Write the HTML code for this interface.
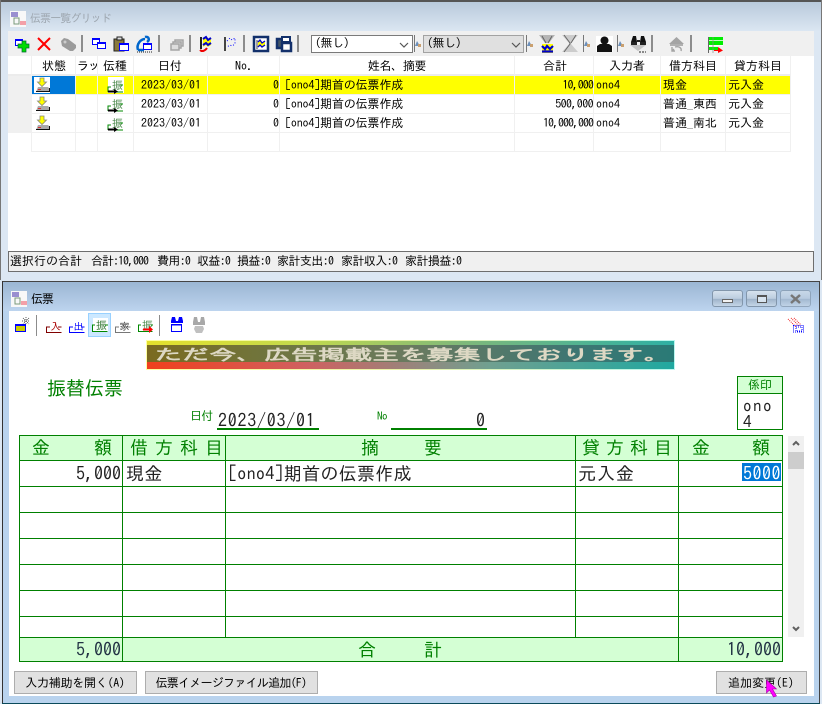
<!DOCTYPE html>
<html lang="ja"><head><meta charset="utf-8"><title>伝票</title>
<style>
html,body{margin:0;padding:0;width:822px;height:704px;overflow:hidden;background:#dce7f3}
body{position:relative;font-family:"Liberation Sans","IPAGothic","Noto Sans CJK JP",sans-serif}
div,svg{position:absolute}
svg{overflow:visible}
.t{font-family:"IPAGothic","Noto Sans CJK JP",monospace;font-size:12px;line-height:14px;white-space:nowrap;color:#000}
.c{transform:translateX(-50%)}
.r{text-align:right}
.v{font-size:18px;line-height:20px;color:#222}
.h{font-size:18px;line-height:20px;color:#008000}
.g{background:#008000}
.l{background:#f0f0f0}
.sep{width:2px;background:#8c8c8c}
.thin{width:1px;background:#777;top:35px;height:17px}
.btn{background:#e1e1e1;border:1px solid #adadad;box-sizing:border-box;height:23px;top:671px}
.wb{top:290px;height:17px;width:31px;box-sizing:border-box;border:1px solid #8296ab;border-radius:3px;background:linear-gradient(#d6e2ee,#bccddf 50%,#9fb4ca 55%,#c4d5e7)}
</style></head><body>

<!-- top window -->
<div style="left:0;top:0;width:822px;height:280px;background:#dce7f3"></div>
<div style="left:0;top:0;width:822px;height:31px;background:linear-gradient(#b6c8da,#dbe6f2)"></div>
<div style="left:0;top:0;width:822px;height:2px;background:#555"></div>
<div style="left:0;top:0;width:1px;height:280px;background:#777"></div>
<div style="left:821px;top:0;width:1px;height:280px;background:#777"></div>
<svg style="left:10px;top:11px" width="16" height="16"><rect width="16" height="16" fill="#f8f8f8"/><rect x="1" y="1" width="7" height="5" fill="#9a8fd0"/><rect x="4" y="7" width="5" height="6" fill="none" stroke="#7a9a7a"/><rect x="10" y="10" width="6" height="4" fill="#f3a0a8"/></svg>
<div class="t" style="left:30px;top:12px;font-size:11px;color:#9ea7b0;letter-spacing:-.9px">伝票一覧グリッド</div>

<!-- toolbar -->
<div style="left:8px;top:31px;width:806px;height:25px;background:#f0f0f0"></div>
<svg style="left:15px;top:37px" width="15" height="15"><rect x=".5" y="2.500" width="7" height="6" fill="#fff" stroke="#00f"/><rect y="2" width="8" height="2" fill="#00f"/><path d="M7 4h4v3h3v4h-3v4H7v-4H3V7h4z" fill="#0d0" stroke="#063" stroke-width=".7"/></svg>
<svg style="left:37px;top:37px" width="14" height="14"><path d="M1 1L13 13M13 1L1 13" stroke="#f00" stroke-width="2"/></svg>
<svg style="left:60px;top:37px" width="17" height="15"><path d="M1 4l3-3 4 1 8 6v3l-3 3h-3L2 9z" fill="#9b9b9b"/><circle cx="5" cy="5" r="1.500" fill="#ccc"/></svg>
<div class="sep" style="left:81px;top:35px;height:17px"></div>
<svg style="left:92px;top:38px" width="14" height="11"><g fill="#fff" stroke="#00f"><rect x=".5" y=".5" width="7" height="6"/><rect x="5.500" y="4.500" width="8" height="6"/></g><rect y="0" width="8" height="2" fill="#00f"/><rect x="5" y="4" width="9" height="2" fill="#00f"/></svg>
<svg style="left:113px;top:36px" width="16" height="16"><rect x="1" y="3" width="10" height="12" fill="#8a7a3c" stroke="#222"/><rect x="4" y="1" width="5" height="3" fill="#ddd" stroke="#222"/><rect x="6.500" y="7.500" width="9" height="7" fill="#fff" stroke="#00f"/><rect x="6" y="7" width="10" height="2" fill="#00f"/></svg>
<svg style="left:136px;top:36px" width="17" height="17"><path d="M2 14C0 8 5 3 9 3M9 1c4-1 5 3 2 5M2 14h6" stroke="#06c" stroke-width="2.500" fill="none"/><rect x="7.500" y="7.500" width="8" height="6" fill="#fff" stroke="#00f"/><rect x="7" y="7" width="9" height="2" fill="#00f"/><path d="M1 16h15" stroke="#222" stroke-dasharray="1 1"/></svg>
<div class="sep" style="left:158px;top:35px;height:17px"></div>
<svg style="left:170px;top:39px" width="14" height="12"><g fill="#ddd" stroke="#a5a5a5" stroke-width="1.500"><rect x="5" y="1" width="8" height="6"/><rect x="3" y="3" width="8" height="6"/><rect x="1" y="5" width="8" height="6"/></g></svg>
<div class="sep" style="left:189px;top:35px;height:17px"></div>
<svg style="left:199px;top:36px" width="14" height="16"><path d="M2 1v12" stroke="#222" stroke-width="2"/><path d="M4 3l3-2 2 3 3-2v7l-3 2-2-2-3 2z" fill="#ff0"/><path d="M4 3l3-2 2 3 3-2M4 9l3-2 2 2 3-2" fill="none" stroke="#00c" stroke-width="2"/><path d="M1 14c2 2 5 1 7-2" stroke="#e00" stroke-width="2" fill="none"/></svg>
<svg style="left:223px;top:36px" width="14" height="15"><path d="M2 1v14" stroke="#444" stroke-width="2"/><path d="M4 5l3-3 2 2 3-2v6l-3 2-2-1-3 2" fill="none" stroke="#00f" stroke-dasharray="1 2"/></svg>
<div class="sep" style="left:243px;top:35px;height:17px"></div>
<svg style="left:253px;top:36px" width="16" height="16"><rect x="1" y="1" width="14" height="14" fill="#fff" stroke="#13306b" stroke-width="2.500"/><path d="M4 4v9" stroke="#444"/><path d="M5 6l2-2 2 3 3-2v5l-3 1-2-2-2 2z" fill="#ff0"/><path d="M5 6l2-2 2 3 3-2M5 11l2-2 2 2 3-2" fill="none" stroke="#00c" stroke-width="1.300"/></svg>
<svg style="left:276px;top:36px" width="16" height="16"><rect x="1" y="3" width="9" height="9" fill="#456" stroke="#13306b" stroke-width="2.500"/><rect x="6" y="1" width="8" height="5" fill="#fff" stroke="#13306b" stroke-width="2"/><rect x="6" y="7" width="9" height="8" fill="#fff" stroke="#13306b" stroke-width="2.500"/></svg>
<div class="sep" style="left:297px;top:35px;height:17px"></div>

<div style="left:311px;top:35px;width:102px;height:18px;box-sizing:border-box;background:#fff;border:1px solid #7a7a7a"></div>
<div class="t" style="left:315px;top:36px;letter-spacing:-.5px">(無し)</div>
<svg style="left:399px;top:42px" width="10" height="6"><path d="M1 1l4 4 4-4" stroke="#555" stroke-width="1.200" fill="none"/></svg>
<div style="left:423px;top:35px;width:101px;height:18px;box-sizing:border-box;background:#e0e0e0;border:1px solid #a2a2a2"></div>
<div class="t" style="left:427px;top:36px;letter-spacing:-.5px">(無し)</div>
<svg style="left:511px;top:42px" width="10" height="6"><path d="M1 1l4 4 4-4" stroke="#555" stroke-width="1.200" fill="none"/></svg>

<div class="thin" style="left:414px"></div>
<div class="thin" style="left:526px"></div>
<div class="thin" style="left:583px"></div>
<div class="thin" style="left:617px"></div>
<svg style="left:415px;top:41px" width="6" height="6"><path d="M2 0l3 5H0z" fill="#6d90bb"/><rect x="3" y="3" width="3" height="3" fill="#c9a070"/></svg>
<svg style="left:527px;top:41px" width="6" height="6"><path d="M2 0l3 5H0z" fill="#6d90bb"/><rect x="3" y="3" width="3" height="3" fill="#c9a070"/></svg>
<svg style="left:584px;top:41px" width="6" height="6"><path d="M2 0l3 5H0z" fill="#6d90bb"/><rect x="3" y="3" width="3" height="3" fill="#c9a070"/></svg>
<svg style="left:618px;top:41px" width="6" height="6"><path d="M2 0l3 5H0z" fill="#6d90bb"/><rect x="3" y="3" width="3" height="3" fill="#c9a070"/></svg>

<svg style="left:539px;top:35px" width="16" height="18"><path d="M0 0h16l-6 8H6z" fill="#b5b5b5"/><path d="M3 1l4 7M13 1L9 8" stroke="#666"/><rect x="3" y="9" width="11" height="9" fill="#ff0"/><path d="M3 11l3 3 2-3 3 3 3-3M3 16.500h11" stroke="#00c" stroke-width="2.200" fill="none"/></svg>
<svg style="left:562px;top:35px" width="16" height="18"><path d="M0 0h16L9 8v1l7 8H0l7-8V8z" fill="#ccc"/><path d="M2 0l6 8v1l-6 8M14 0L9 8" stroke="#666" fill="none"/></svg>
<svg style="left:596px;top:36px" width="17" height="16"><rect width="17" height="16" fill="#fff"/><circle cx="8.500" cy="4.500" r="4" fill="#111"/><path d="M1 16V10l3-2h9l3 2v6z" fill="#111"/></svg>
<svg style="left:630px;top:36px" width="17" height="17"><path d="M3 0h3l1 6H1zM11 0h3l2 6h-6z" fill="#111"/><path d="M1 6h6v3H1zM10 6h6v3h-6zM7 4h3v2H7z" fill="#222"/><path d="M0 9h16l-8 6z" fill="#c4c4c4"/><path d="M9 16h7" stroke="#222" stroke-dasharray="2 1"/></svg>
<div class="sep" style="left:651px;top:35px;height:17px"></div>
<svg style="left:669px;top:37px" width="15" height="15"><path d="M7.500 0L15 7H0z" fill="#a4a4a4"/><rect x="1" y="7" width="13" height="2" fill="#b0b0b0"/><path d="M3 10v4h3M5 12l-2 2M6 10c4-1 7 1 6 4" stroke="#a4a4a4" stroke-width="1.400" fill="none"/></svg>
<div class="sep" style="left:690px;top:35px;height:17px"></div>
<svg style="left:708px;top:37px" width="16" height="16"><rect width="15" height="8" fill="#0e0"/><rect y="10" width="10" height="3" fill="#0e0"/><path d="M0 3.500h15M0 8.500h15" stroke="#fff" stroke-width=".8"/><path d="M.5 0v16" stroke="#666"/><path d="M5 0v16" stroke="#888" stroke-width=".7"/><path d="M6 13h4V10l5 3.500-5 2.500v-2H6z" fill="#f00"/></svg>

<!-- grid -->
<div style="left:8px;top:56px;width:806px;height:195px;background:#fff"></div>
<div class="l" style="left:8px;top:75px;width:23px;height:57px"></div>
<div style="left:76px;top:75px;width:714px;height:19px;background:#ff0"></div>
<div style="left:32px;top:75px;width:44px;height:19px;background:#0078d7"></div>
<div style="left:34px;top:77px;width:16px;height:16px;background:#fff"></div>

<div class="l" style="left:8px;top:74px;width:783px;height:2px;background:#ececec"></div>
<div class="l" style="left:8px;top:94px;width:783px;height:1px"></div>
<div class="l" style="left:8px;top:113px;width:783px;height:1px"></div>
<div class="l" style="left:8px;top:132px;width:783px;height:1px"></div>
<div class="l" style="left:31px;top:151px;width:760px;height:1px"></div>
<div class="l" style="left:31px;top:56px;width:1px;height:96px"></div>
<div class="l" style="left:75px;top:56px;width:1px;height:96px"></div>
<div class="l" style="left:97px;top:56px;width:1px;height:96px"></div>
<div class="l" style="left:133px;top:56px;width:1px;height:96px"></div>
<div class="l" style="left:207px;top:56px;width:1px;height:96px"></div>
<div class="l" style="left:279px;top:56px;width:1px;height:96px"></div>
<div class="l" style="left:514px;top:56px;width:1px;height:96px"></div>
<div class="l" style="left:593px;top:56px;width:1px;height:96px"></div>
<div class="l" style="left:660px;top:56px;width:1px;height:96px"></div>
<div class="l" style="left:725px;top:56px;width:1px;height:96px"></div>
<div class="l" style="left:790px;top:56px;width:1px;height:96px"></div>

<div class="t c" style="left:54px;top:59px">状態</div>
<div style="left:76px;top:58px;width:21px;height:16px;overflow:hidden"><div class="t" style="left:1px;top:1px;letter-spacing:-1px">ラッ</div></div>
<div class="t c" style="left:115px;top:59px">伝種</div>
<div class="t c" style="left:170px;top:59px">日付</div>
<div class="t c" style="left:244px;top:59px">No.</div>
<div class="t c" style="left:397px;top:59px;letter-spacing:-.3px">姓名、摘要</div>
<div class="t c" style="left:555px;top:59px">合計</div>
<div class="t c" style="left:627px;top:59px">入力者</div>
<div class="t c" style="left:693px;top:59px">借方科目</div>
<div class="t c" style="left:758px;top:59px">貸方科目</div>

<!-- row icons -->
<svg style="left:36px;top:77px" width="14" height="15"><path d="M4 1h4v4h2.500L6 9.500 1.500 5H4z" fill="#ff0" stroke="#887" stroke-width=".8"/><path d="M2 10h10l1 1v4H0z" fill="#aaa"/><rect y="14" width="14" height="1" fill="#111"/><rect x="13" y="11" width="1" height="4" fill="#111"/><rect x="2" y="12" width="3" height="1" fill="#d33"/></svg>
<svg style="left:36px;top:96px" width="14" height="15"><path d="M4 1h4v4h2.500L6 9.500 1.500 5H4z" fill="#ff0" stroke="#887" stroke-width=".8"/><path d="M2 10h10l1 1v4H0z" fill="#aaa"/><rect y="14" width="14" height="1" fill="#111"/><rect x="13" y="11" width="1" height="4" fill="#111"/><rect x="2" y="12" width="3" height="1" fill="#d33"/></svg>
<svg style="left:36px;top:115px" width="14" height="15"><path d="M4 1h4v4h2.500L6 9.500 1.500 5H4z" fill="#ff0" stroke="#887" stroke-width=".8"/><path d="M2 10h10l1 1v4H0z" fill="#aaa"/><rect y="14" width="14" height="1" fill="#111"/><rect x="13" y="11" width="1" height="4" fill="#111"/><rect x="2" y="12" width="3" height="1" fill="#d33"/></svg>

<svg style="left:107px;top:77px" width="17" height="17"><rect x="1" width="16" height="16" fill="#fff"/><text x="5" y="12" font-family="IPAGothic" font-size="11" fill="#4d8a4d">振</text><path d="M1 15V10h3M1 15h15M13 8h3" stroke="#080" fill="none"/><path d="M1 13.500h6V12l4 2.500-4 2.500v-1.500H1z" fill="#000"/></svg>
<svg style="left:107px;top:96px" width="17" height="17"><text x="5" y="12" font-family="IPAGothic" font-size="11" fill="#4d8a4d">振</text><path d="M1 15V10h3M1 15h15M13 8h3" stroke="#080" fill="none"/><path d="M1 13.500h6V12l4 2.500-4 2.500v-1.500H1z" fill="#000"/></svg>
<svg style="left:107px;top:115px" width="17" height="17"><text x="5" y="12" font-family="IPAGothic" font-size="11" fill="#4d8a4d">振</text><path d="M1 15V10h3M1 15h15M13 8h3" stroke="#080" fill="none"/><path d="M1 13.500h6V12l4 2.500-4 2.500v-1.500H1z" fill="#000"/></svg>

<!-- rows -->
<div class="t" style="left:141px;top:78px">2023/03/01</div>
<div class="t r" style="left:239px;width:40px;top:78px">0</div>
<div class="t" style="left:285px;top:78px;letter-spacing:-.15px">[ono4]期首の伝票作成</div>
<div class="t r" style="left:520px;width:73px;top:78px;letter-spacing:-.9px">10,000</div>
<div class="t" style="left:596px;top:78px">ono4</div>
<div class="t" style="left:663px;top:78px">現金</div>
<div class="t" style="left:728px;top:78px">元入金</div>

<div class="t" style="left:141px;top:97px">2023/03/01</div>
<div class="t r" style="left:239px;width:40px;top:97px">0</div>
<div class="t" style="left:285px;top:97px;letter-spacing:-.15px">[ono4]期首の伝票作成</div>
<div class="t r" style="left:520px;width:73px;top:97px;letter-spacing:-.6px">500,000</div>
<div class="t" style="left:596px;top:97px">ono4</div>
<div class="t" style="left:663px;top:97px">普通_東西</div>
<div class="t" style="left:728px;top:97px">元入金</div>

<div class="t" style="left:141px;top:116px">2023/03/01</div>
<div class="t r" style="left:239px;width:40px;top:116px">0</div>
<div class="t" style="left:285px;top:116px;letter-spacing:-.15px">[ono4]期首の伝票作成</div>
<div class="t r" style="left:520px;width:73px;top:116px;letter-spacing:-1px">10,000,000</div>
<div class="t" style="left:596px;top:116px">ono4</div>
<div class="t" style="left:663px;top:116px">普通_南北</div>
<div class="t" style="left:728px;top:116px">元入金</div>

<!-- status -->
<div style="left:8px;top:251px;width:806px;height:21px;box-sizing:border-box;background:#f0f0f0;border:1px solid #6e6e6e"></div>
<div class="t" style="left:10px;top:254px">選択行の合計</div>
<div class="t" style="left:91px;top:254px;letter-spacing:-1px">合計:10,000</div>
<div class="t" style="left:157px;top:254px;letter-spacing:-.7px">費用:0</div>
<div class="t" style="left:197px;top:254px;letter-spacing:-.7px">収益:0</div>
<div class="t" style="left:237px;top:254px;letter-spacing:-.7px">損益:0</div>
<div class="t" style="left:277px;top:254px;letter-spacing:-.6px">家計支出:0</div>
<div class="t" style="left:341px;top:254px;letter-spacing:-.6px">家計収入:0</div>
<div class="t" style="left:405px;top:254px;letter-spacing:-.6px">家計損益:0</div>

<!-- bottom window -->
<div style="left:2px;top:281px;width:818px;height:423px;background:#b9d3ee"></div>
<div style="left:2px;top:282px;width:818px;height:29px;background:linear-gradient(#9bb6d3,#bdd4ee)"></div>
<div style="left:2px;top:281px;width:818px;height:1px;background:#444"></div>
<div style="left:2px;top:281px;width:1px;height:423px;background:#333"></div>
<div style="left:819px;top:281px;width:1px;height:423px;background:#444"></div>
<div style="left:2px;top:703px;width:818px;height:1px;background:#0a4a5a"></div>
<svg style="left:11px;top:291px" width="16" height="16"><rect width="16" height="16" fill="#f8f8f8"/><rect x="1" y="1" width="7" height="5" fill="#9a8fd0"/><rect x="4" y="7" width="5" height="6" fill="none" stroke="#7a9a7a"/><rect x="10" y="10" width="6" height="4" fill="#f3a0a8"/></svg>
<div class="t" style="left:31px;top:292px;letter-spacing:-1px">伝票</div>

<div class="wb" style="left:712px"></div>
<div style="left:722px;top:299px;width:11px;height:4px;background:#f2f2f2;border:1px solid #666;box-sizing:border-box"></div>
<div class="wb" style="left:746px"></div>
<div style="left:757px;top:295px;width:10px;height:8px;border:1px solid #555;border-top-width:2px;box-sizing:border-box;background:#d8e4ef"></div>
<div class="wb" style="left:780px;opacity:.7"></div>
<svg style="left:790px;top:295px" width="11" height="8"><path d="M1 0l9 8M10 0L1 8" stroke="#777" stroke-width="2.500"/></svg>

<div style="left:9px;top:311px;width:805px;height:385px;background:#fff"></div>

<!-- voucher toolbar -->
<svg style="left:15px;top:317px" width="16" height="16"><rect x=".5" y="7.500" width="10" height="7" fill="#cc0" stroke="#00f"/><rect y="7" width="11" height="2" fill="#00f"/><path d="M8 1l6 6M14 1L8 7M7 4h8M11 0v8" stroke="#222" stroke-width=".7" stroke-dasharray="1 1"/></svg>
<div class="sep" style="left:36px;top:315px;height:21px;width:1px"></div>
<svg style="left:46px;top:320px" width="16" height="14"><path d="M.5 13V7H4M.5 12.500h15M12 7h3.500" stroke="#800000" fill="none"/><text x="4.500" y="10" font-family="IPAGothic" font-size="10" fill="#a00">入</text></svg>
<svg style="left:69px;top:320px" width="16" height="14"><path d="M.5 13V7H4M.5 12.500h15M12 7h3.500" stroke="#00f" fill="none"/><text x="4.500" y="10" font-family="IPAGothic" font-size="10" fill="#00f">出</text></svg>
<div style="left:88px;top:313px;width:23px;height:24px;box-sizing:border-box;background:#cce8ff;border:1px solid #99d1ff"></div>
<svg style="left:92px;top:318px" width="16" height="16"><rect x="1" width="15" height="14" fill="#fff"/><text x="4" y="11" font-family="IPAGothic" font-size="11" fill="#397a39">振</text><path d="M.5 14V7H3M.5 13.500h15M13 7h3" stroke="#080" fill="none"/></svg>
<svg style="left:115px;top:320px" width="16" height="14"><path d="M.5 13V7H4M.5 12.500h15M12 7h3.500" stroke="#777" fill="none"/><text x="4.500" y="10" font-family="IPAGothic" font-size="10" fill="#333">家</text></svg>
<svg style="left:138px;top:318px" width="16" height="16"><text x="4" y="11" font-family="IPAGothic" font-size="11" fill="#4d8a4d">振</text><path d="M.5 14V7H3M.5 13.500h14M13 7h2" stroke="#080" fill="none"/><path d="M5 10.500h6V8l4 3.500-4 3.500v-2.500H5z" fill="#f00"/></svg>
<div class="sep" style="left:159px;top:315px;height:21px;width:1px"></div>
<svg style="left:170px;top:317px" width="14" height="15"><path d="M2 0h3l1 4H1zM9 0h3l1 4H8z" fill="#00f"/><rect x="1" y="4" width="12" height="2" fill="#00f"/><rect x="1.500" y="7.500" width="10" height="7" fill="#fff" stroke="#00f"/><rect x="1" y="7" width="11" height="1.500" fill="#00f"/></svg>
<svg style="left:192px;top:317px" width="14" height="16"><path d="M2 0h3l1 5H1zM9 0h3l1 5H8z" fill="#a8a8a8"/><rect x="1" y="5" width="12" height="3" fill="#a8a8a8"/><path d="M3 9h8l1 3-2 4H4l-2-4z" fill="#c0c0c0"/></svg>
<svg style="left:788px;top:318px" width="16" height="15"><path d="M0 1l8 8M3 0l8 8M6 0l7 7" stroke="#e22" stroke-dasharray="1 1" fill="none"/><rect x="5.500" y="7.500" width="10" height="6.500" fill="none" stroke="#00f" stroke-dasharray="1 1"/><rect x="8" y="9" width="6" height="4" fill="none" stroke="#00f" stroke-dasharray="1 1"/></svg>

<!-- banner -->
<div style="left:146px;top:340px;width:529px;height:30px;background:linear-gradient(90deg,#ffffa0,#e8f3a8 50%,#b9f7f0)"></div>
<div style="left:147px;top:341px;width:527px;height:28px;background:linear-gradient(90deg,#e4e02c,#c2d94e 30%,#7fb87a 60%,#2eb0a4)"></div>
<div style="left:147px;top:345px;width:527px;height:19px;background:linear-gradient(90deg,#7a6a20,#6f7640 25%,#6a7a60 50%,#3f7672 80%,#2a7a76)"></div>
<div style="left:147px;top:362px;width:527px;height:7px;background:linear-gradient(90deg,#f0401c,#d06060 30%,#70a090 65%,#20a8a0)"></div>
<div class="t" style="left:155px;top:346px;font-size:15px;line-height:17px;font-weight:bold;color:#ddd8c4;transform-origin:0 50%;transform:scaleX(1.810)">ただ今、広告掲載主を募集しております。</div>

<div class="t h" style="left:47px;top:379px;font-size:19px">振替伝票</div>
<div class="t" style="left:190px;top:409px;color:#008000;letter-spacing:-.6px">日付</div>
<div class="t v" style="left:218px;top:411px;letter-spacing:.75px;color:#222">2023/03/01</div>
<div class="g" style="left:217px;top:428px;width:102px;height:2px"></div>
<div class="t" style="left:377px;top:410px;color:#008000;font-size:11px;letter-spacing:-.5px">No</div>
<div class="t v" style="left:400px;width:85px;top:411px;text-align:right">0</div>
<div class="g" style="left:391px;top:428px;width:96px;height:2px"></div>

<!-- stamp -->
<div style="left:737px;top:376px;width:46px;height:54px;box-sizing:border-box;border:1px solid #008000;background:#fff"></div>
<div style="left:738px;top:377px;width:44px;height:16px;background:#d4ffd4;border-bottom:1px solid #008000"></div>
<div class="t c" style="left:760px;top:378px;color:#008000">係印</div>
<div class="t" style="left:743px;top:398px;font-size:17px;line-height:17px;letter-spacing:1.500px;color:#222">ono</div>
<div class="t" style="left:743px;top:414px;font-size:17px;line-height:17px;color:#222">4</div>

<!-- table -->
<div style="left:20px;top:436px;width:762px;height:25px;background:#d4ffd4"></div>
<div style="left:20px;top:638px;width:762px;height:23px;background:#d4ffd4"></div>
<div class="g" style="left:19px;top:435px;width:764px;height:1px"></div>
<div class="g" style="left:19px;top:460px;width:764px;height:1px"></div>
<div class="g" style="left:19px;top:486px;width:764px;height:1px"></div>
<div class="g" style="left:19px;top:512px;width:764px;height:1px"></div>
<div class="g" style="left:19px;top:538px;width:764px;height:1px"></div>
<div class="g" style="left:19px;top:564px;width:764px;height:1px"></div>
<div class="g" style="left:19px;top:590px;width:764px;height:1px"></div>
<div class="g" style="left:19px;top:616px;width:764px;height:1px"></div>
<div class="g" style="left:19px;top:637px;width:764px;height:1px"></div>
<div class="g" style="left:19px;top:661px;width:764px;height:1px"></div>
<div class="g" style="left:19px;top:435px;width:1px;height:227px"></div>
<div class="g" style="left:122px;top:435px;width:1px;height:227px"></div>
<div class="g" style="left:225px;top:435px;width:1px;height:203px"></div>
<div class="g" style="left:575px;top:435px;width:1px;height:203px"></div>
<div class="g" style="left:678px;top:435px;width:1px;height:227px"></div>
<div class="g" style="left:782px;top:435px;width:1px;height:227px"></div>

<div class="t h" style="left:32px;top:438px">金</div>
<div class="t h" style="left:94px;top:438px">額</div>
<div class="t h" style="left:130px;top:438px;letter-spacing:7px">借方科目</div>
<div class="t h" style="left:361px;top:438px">摘</div>
<div class="t h" style="left:424px;top:438px">要</div>
<div class="t h" style="left:582px;top:438px;letter-spacing:6px">貸方科目</div>
<div class="t h" style="left:692px;top:438px">金</div>
<div class="t h" style="left:752px;top:438px">額</div>

<div class="t v r" style="left:40px;width:81px;top:464px">5,000</div>
<div class="t v" style="left:126px;top:464px;letter-spacing:.5px">現金</div>
<div class="t v" style="left:228px;top:464px;letter-spacing:.3px">[ono4]期首の伝票作成</div>
<div class="t v" style="left:578px;top:464px;letter-spacing:1px">元入金</div>
<div style="left:742px;top:463px;width:39px;height:18px;background:#0078d7"></div>
<div class="t v" style="left:743px;top:464px;color:#fff;letter-spacing:.5px">5000</div>

<div class="t v r" style="left:40px;width:81px;top:640px;color:#234">5,000</div>
<div class="t h" style="left:358px;top:640px">合</div>
<div class="t h" style="left:424px;top:640px">計</div>
<div class="t v r" style="left:700px;width:81px;top:640px;color:#234">10,000</div>

<!-- scrollbar -->
<div style="left:788px;top:436px;width:16px;height:201px;background:#f0f0f0"></div>
<div style="left:788px;top:452px;width:16px;height:17px;background:#cdcdcd"></div>
<svg style="left:792px;top:440px" width="8" height="6"><path d="M1 5l3-3 3 3" stroke="#606060" stroke-width="2" fill="none"/></svg>
<svg style="left:792px;top:626px" width="8" height="6"><path d="M1 1l3 3 3-3" stroke="#606060" stroke-width="2" fill="none"/></svg>

<!-- buttons -->
<div class="btn" style="left:14px;width:123px"></div>
<div class="t c" style="left:75px;top:676px;letter-spacing:-.25px">入力補助を開く(A)</div>
<div class="btn" style="left:145px;width:173px"></div>
<div class="t c" style="left:231px;top:676px;letter-spacing:-.75px">伝票イメージファイル追加(F)</div>
<div class="btn" style="left:716px;width:91px"></div>
<div class="t c" style="left:761px;top:676px">追加変更(E)</div>

<svg style="left:766px;top:680px" width="12" height="18"><path d="M.5 0v13l3-3 4 7 3-1-4-7h4z" fill="#f0f" stroke="#a0a" stroke-width=".6"/></svg>
</body></html>
